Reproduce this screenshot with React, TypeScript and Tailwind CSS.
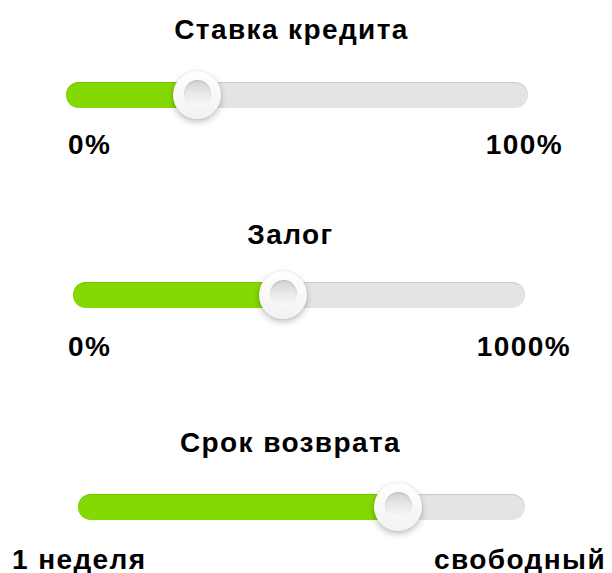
import React from "react";

type SliderProps = {
  pos: number; // thumb centre, px from the track's left edge
};

function Thumb() {
  return (
    <div className="relative w-[48px] h-[48px] rounded-full bg-gradient-to-b from-[#ffffff] to-[#f2f2f2] shadow-[0_3px_6px_rgba(0,0,0,0.25),0_0_1px_rgba(0,0,0,0.25)] flex items-center justify-center">
      <div className="w-[27px] h-[27px] rounded-full bg-gradient-to-b from-[#d2d2d2] via-[#e9e9e9] to-[#fbfbfb] shadow-[inset_0_1px_2px_rgba(0,0,0,0.12)] -mt-[3px]" />
    </div>
  );
}

function Track({ pos, className }: SliderProps & { className: string }) {
  return (
    <div
      className={
        "relative h-[26px] rounded-full bg-[#e4e4e4] shadow-[inset_0_1px_1px_rgba(0,0,0,0.12)] " +
        className
      }
    >
      <div
        className="absolute left-0 top-0 bottom-0 rounded-l-full bg-[#84d902] shadow-[inset_0_1px_1px_rgba(0,0,0,0.1)]"
        style={{ width: pos }}
      />
      <div
        className="absolute top-1/2 -translate-y-1/2"
        style={{ left: pos - 24 }}
      >
        <Thumb />
      </div>
    </div>
  );
}

export default function App() {
  return (
    <div className="w-[612px] h-[573px] overflow-hidden bg-white text-black font-bold font-['Liberation_Sans',Arial,sans-serif] text-[28px] leading-[28px] tracking-[1.4px]">
      {/* Ставка кредита */}
      <div className="pt-[16px]">
        <div className="w-[583px] text-center">Ставка кредита</div>
        <Track pos={131} className="mt-[38px] ml-[66px] w-[462px]" />
        <div className="mt-[23px] flex justify-between pl-[68px] pr-[49px]">
          <span>0%</span>
          <span>100%</span>
        </div>
      </div>

      {/* Залог */}
      <div className="mt-[62px]">
        <div className="w-[581px] text-center">Залог</div>
        <Track pos={210} className="mt-[33px] ml-[73px] w-[452px]" />
        <div className="mt-[25px] flex justify-between pl-[68px] pr-[41px]">
          <span>0%</span>
          <span>1000%</span>
        </div>
      </div>

      {/* Срок возврата */}
      <div className="mt-[68px]">
        <div className="w-[581px] text-center">Срок возврата</div>
        <Track pos={320} className="mt-[37px] ml-[78px] w-[447px]" />
        <div className="mt-[26px] flex justify-between pl-[12px] pr-[6px]">
          <span>1 неделя</span>
          <span>свободный</span>
        </div>
      </div>
    </div>
  );
}
